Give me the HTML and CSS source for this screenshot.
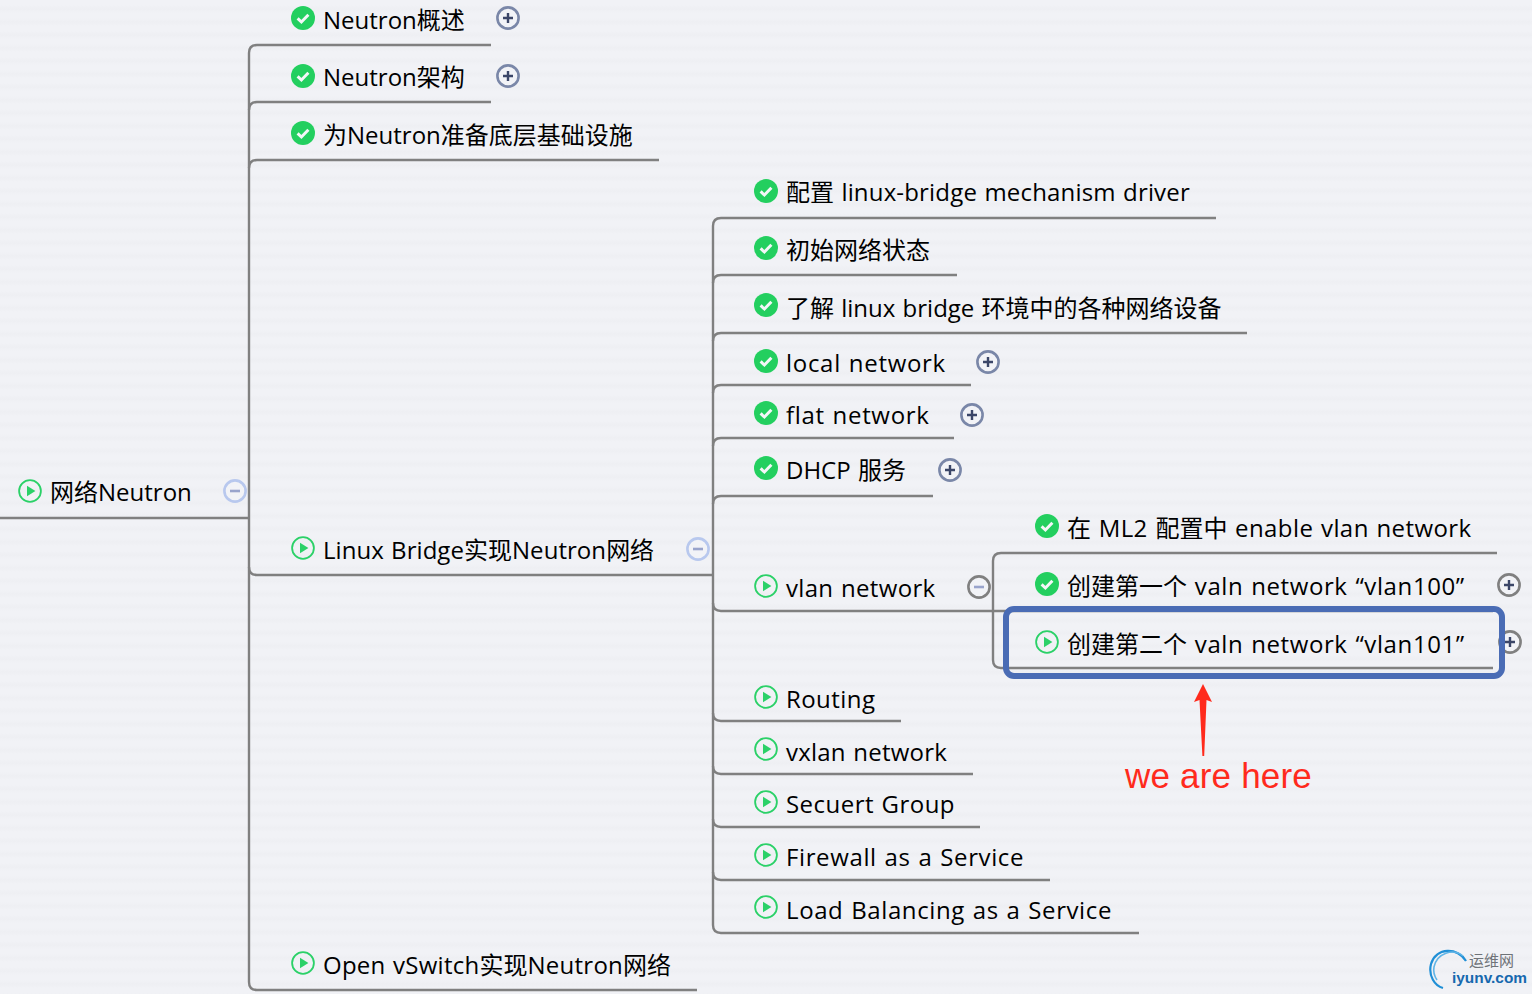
FILE: index.html
```html
<!DOCTYPE html>
<html lang="zh">
<head>
<meta charset="utf-8">
<title>网络Neutron</title>
<link rel="stylesheet" href="styles.css">
</head>
<body>
<svg width="0" height="0" class="defs">
  <defs>
    <symbol id="done" viewBox="0 0 24 24"><circle cx="12" cy="12" r="12" fill="#23cf5f"/><path d="M6.6 12.4l3.8 3.6 7-7.2" fill="none" stroke="#f4f6f8" stroke-width="3"/></symbol>
    <symbol id="play" viewBox="0 0 24 24"><circle cx="12" cy="12" r="10.9" fill="none" stroke="#2bd168" stroke-width="1.8"/><path d="M9 6.8L17.4 12 9 17.2z" fill="#2bd168"/></symbol>
    <symbol id="plus" viewBox="0 0 24 24"><circle cx="12" cy="12" r="10.6" fill="#f2f3f7" stroke="currentColor" stroke-width="2.6"/><path d="M12 7v10M7 12h10" stroke="#3b4668" stroke-width="2.4"/></symbol>
    <symbol id="minus" viewBox="0 0 24 24"><circle cx="12" cy="12" r="10.6" fill="#f2f3f7" stroke="currentColor" stroke-width="2.6"/><path d="M7 12h10" stroke="#99a4cc" stroke-width="2.6"/></symbol>
  </defs>
</svg>
<main class="map">
  <svg class="links" width="1532" height="994" viewBox="0 0 1532 994">
    <g fill="none" stroke="#808080" stroke-width="2.4">
      <path d="M0 518H249"/>
      <path d="M491 45H257Q249 45 249 53V982Q249 990 257 990H697"/>
      <path d="M491 102H257Q249 102 249 110"/>
      <path d="M659 160H257Q249 160 249 168"/>
      <path d="M249 567Q249 575 257 575H713"/>
      <path d="M1216 218H721Q713 218 713 226V925Q713 933 721 933H1139"/>
      <path d="M957 275H721Q713 275 713 283"/>
      <path d="M1247 333H721Q713 333 713 341"/>
      <path d="M971 385H721Q713 385 713 393"/>
      <path d="M954 438H721Q713 438 713 446"/>
      <path d="M933 496H721Q713 496 713 504"/>
      <path d="M713 603Q713 611 721 611H1493"/>
      <path d="M713 713Q713 721 721 721H901"/>
      <path d="M713 766Q713 774 721 774H973"/>
      <path d="M713 819Q713 827 721 827H980"/>
      <path d="M713 872Q713 880 721 880H1050"/>
      <path d="M1497 553H1001Q993 553 993 561V660Q993 668 1001 668H1493"/>
    </g>
  </svg>

  <div class="node n-root"><svg class="ic"><use href="#play"/></svg><span class="label">网络<span class="lat">Neutron</span></span><svg class="tg tg-blue"><use href="#minus"/></svg></div>

  <div class="node n-a1"><svg class="ic"><use href="#done"/></svg><span class="label"><span class="lat">Neutron</span>概述</span><svg class="tg tg-slate"><use href="#plus"/></svg></div>
  <div class="node n-a2"><svg class="ic"><use href="#done"/></svg><span class="label"><span class="lat">Neutron</span>架构</span><svg class="tg tg-slate"><use href="#plus"/></svg></div>
  <div class="node n-a3"><svg class="ic"><use href="#done"/></svg><span class="label">为<span class="lat">Neutron</span>准备底层基础设施</span></div>
  <div class="node n-a4"><svg class="ic"><use href="#play"/></svg><span class="label"><span class="lat">Linux Bridge</span>实现<span class="lat">Neutron</span>网络</span><svg class="tg tg-blue"><use href="#minus"/></svg></div>
  <div class="node n-a5"><svg class="ic"><use href="#play"/></svg><span class="label"><span class="lat">Open vSwitch</span>实现<span class="lat">Neutron</span>网络</span></div>

  <div class="node n-b1"><svg class="ic"><use href="#done"/></svg><span class="label">配置<span class="lat"> linux-bridge mechanism driver</span></span></div>
  <div class="node n-b2"><svg class="ic"><use href="#done"/></svg><span class="label">初始网络状态</span></div>
  <div class="node n-b3"><svg class="ic"><use href="#done"/></svg><span class="label">了解<span class="lat"> linux bridge </span>环境中的各种网络设备</span></div>
  <div class="node n-b4"><svg class="ic"><use href="#done"/></svg><span class="label"><span class="lat">local network</span></span><svg class="tg tg-slate"><use href="#plus"/></svg></div>
  <div class="node n-b5"><svg class="ic"><use href="#done"/></svg><span class="label"><span class="lat">flat network</span></span><svg class="tg tg-slate"><use href="#plus"/></svg></div>
  <div class="node n-b6"><svg class="ic"><use href="#done"/></svg><span class="label"><span class="lat">DHCP </span>服务</span><svg class="tg tg-slate"><use href="#plus"/></svg></div>
  <div class="node n-b7"><svg class="ic"><use href="#play"/></svg><span class="label"><span class="lat">vlan network</span></span><svg class="tg tg-gray"><use href="#minus"/></svg></div>
  <div class="node n-b8"><svg class="ic"><use href="#play"/></svg><span class="label"><span class="lat">Routing</span></span></div>
  <div class="node n-b9"><svg class="ic"><use href="#play"/></svg><span class="label"><span class="lat">vxlan network</span></span></div>
  <div class="node n-b10"><svg class="ic"><use href="#play"/></svg><span class="label"><span class="lat">Secuert Group</span></span></div>
  <div class="node n-b11"><svg class="ic"><use href="#play"/></svg><span class="label"><span class="lat">Firewall as a Service</span></span></div>
  <div class="node n-b12"><svg class="ic"><use href="#play"/></svg><span class="label"><span class="lat">Load Balancing as a Service</span></span></div>

  <div class="node n-c1"><svg class="ic"><use href="#done"/></svg><span class="label">在<span class="lat"> ML2 </span>配置中<span class="lat"> enable vlan network</span></span></div>
  <div class="node n-c2"><svg class="ic"><use href="#done"/></svg><span class="label">创建第一个<span class="lat"> valn network “vlan100”</span></span><svg class="tg tg-gray"><use href="#plus"/></svg></div>
  <div class="node n-c3"><svg class="ic"><use href="#play"/></svg><span class="label">创建第二个<span class="lat"> valn network “vlan101”</span></span><svg class="tg tg-gray"><use href="#plus"/></svg></div>

  <div class="highlight"></div>
  <svg class="arrow" width="24" height="74" viewBox="0 0 24 74"><path d="M12 0L21 18 15.5 16 13.2 72H11.4L8.5 16 3 18z" fill="#ff2a1c"/></svg>
  <div class="note">we are here</div>

  <div class="brand">
    <svg class="brand-logo" width="40" height="42" viewBox="0 0 40 42"><g fill="none"><path d="M38 13C30-1 8-1 3 16 0 28 7 38 15 40" stroke="#1f8fd6" stroke-width="2.2"/><path d="M35 8C25 0 9 5 6 19 5 24 7 29 9 32" stroke="#5fb4e6" stroke-width="1.6"/></g></svg>
    <span class="brand-cn">运维网</span>
    <span class="brand-en">iyunv.com</span>
  </div>
</main>
</body>
</html>
```
FILE: styles.css
```css
html, body {
  margin: 0;
  padding: 0;
}
body {
  width: 1532px;
  height: 994px;
  overflow: hidden;
  background: #f0f1f5;
  font-family: "Open Sans", "Noto Sans CJK SC", sans-serif;
  color: #000;
}
.defs {
  position: absolute;
}
.map {
  position: relative;
  width: 1532px;
  height: 994px;
  overflow: hidden;
  background: repeating-linear-gradient(180deg, #f1f2f6 0, #f1f2f6 5px, #eeeff3 9px, #f1f2f6 13px);
}
.links {
  position: absolute;
  left: 0;
  top: 0;
}
.node {
  position: absolute;
  display: flex;
  align-items: center;
  height: 24px;
  white-space: pre;
}
.ic {
  width: 24px;
  height: 24px;
  flex: none;
  margin-right: 8px;
}
.label {
  font-size: 24px;
  line-height: 30px;
  position: relative;
  top: calc(2px + var(--dy, 0px));
  word-spacing: 1px;
}
.lat {
  letter-spacing: var(--ls, 0px);
}
.tg {
  width: 24px;
  height: 24px;
  flex: none;
  margin-left: var(--tx, 31px);
  position: relative;
  top: var(--ty, 0px);
}
.tg-slate { color: #7a87a8; }
.tg-blue { color: #b8c8ee; }
.tg-gray { color: #808080; }

.n-root { left: 18px; top: 479px; --dy: -1px; }
.n-a1 { left: 291px; top: 6px; }
.n-a2 { left: 291px; top: 64px; --dy: -1px; }
.n-a3 { left: 291px; top: 121px; }
.n-a4 { left: 291px; top: 536px; --ls: .05px; --tx: 32px; --ty: 1px; }
.n-a5 { left: 291px; top: 951px; --ls: .26px; }
.n-b1 { left: 754px; top: 179px; --ls: .17px; --dy: -1px; }
.n-b2 { left: 754px; top: 236px; }
.n-b3 { left: 754px; top: 293px; --dy: 1px; }
.n-b4 { left: 754px; top: 349px; --ls: .7px; --ty: 1px; --tx: 30px; }
.n-b5 { left: 754px; top: 401px; --ls: .67px; --ty: 2px; --tx: 30px; }
.n-b6 { left: 754px; top: 456px; --ty: 2px; --tx: 32px; }
.n-b7 { left: 754px; top: 574px; --ls: .33px; --ty: 1px; }
.n-b8 { left: 754px; top: 685px; --ls: .43px; }
.n-b9 { left: 754px; top: 737px; --ls: .23px; --dy: 1px; }
.n-b10 { left: 754px; top: 790px; --ls: .46px; }
.n-b11 { left: 754px; top: 843px; --ls: .62px; }
.n-b12 { left: 754px; top: 895px; --ls: .6px; --dy: 1px; }
.n-c1 { left: 1035px; top: 514px; --ls: .42px; }
.n-c2 { left: 1035px; top: 572px; --ls: .6px; --ty: 1px; --tx: 32px; }
.n-c3 { left: 1035px; top: 630px; --ls: .6px; --tx: 33px; }

.highlight {
  position: absolute;
  left: 1003px;
  top: 606px;
  width: 490px;
  height: 61px;
  border: 6px solid #4a6cb5;
  border-radius: 11px;
}
.arrow {
  position: absolute;
  left: 1191px;
  top: 684px;
}
.note {
  position: absolute;
  left: 1125px;
  top: 756px;
  font-family: "Liberation Sans", sans-serif;
  font-size: 35px;
  line-height: 40px;
  letter-spacing: .2px;
  color: #ff2a1c;
  white-space: nowrap;
}
.brand {
  position: absolute;
  left: 1428px;
  top: 948px;
  width: 104px;
  height: 46px;
}
.brand-logo {
  position: absolute;
  left: 0;
  top: 0;
}
.brand-cn {
  position: absolute;
  left: 41px;
  top: 3px;
  font-family: "Noto Sans CJK SC", sans-serif;
  font-size: 15px;
  line-height: 18px;
  color: #6f7378;
}
.brand-en {
  position: absolute;
  left: 24px;
  top: 21px;
  font-family: "Liberation Sans", sans-serif;
  font-size: 15.4px;
  line-height: 18px;
  font-weight: 700;
  color: #1668ae;
}
```
